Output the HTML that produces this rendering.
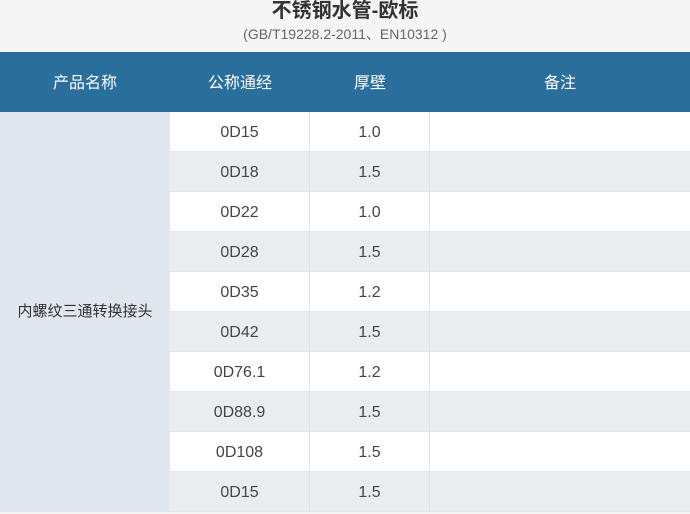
<!DOCTYPE html>
<html><head><meta charset="utf-8"><style>
*{margin:0;padding:0;box-sizing:border-box}
body{width:690px;height:512px;overflow:hidden;background:#f5f5f5;font-family:"Liberation Sans","Noto Sans CJK SC",sans-serif;color:#333}
.t{position:absolute;top:0;left:0;width:690px;text-align:center;font-size:20px;font-weight:bold;line-height:22px;color:#333}
.s{position:absolute;top:25px;left:0;width:690px;text-align:center;font-size:14px;line-height:19px;color:#666}
.h{position:absolute;top:52px;left:0;width:690px;height:60px;background:#2a6e9c;color:#fff;font-size:16px}
.h div{position:absolute;top:2px;line-height:60px;text-align:center}
.n{position:absolute;left:0;top:112px;width:170px;height:400px;background:#e1e7ee;font-size:15px;line-height:400px;text-align:center;padding-right:0px}
.r{position:absolute;left:170px;width:520px;height:40px;font-size:16px;color:#444;border-bottom:1px solid #e4e6e8}
.r div{position:absolute;top:0;height:40px;line-height:42px;text-align:center;border-right:1px solid #e2e2e2}
</style></head><body>
<div class="t">不锈钢水管-欧标</div>
<div class="s">(GB/T19228.2-2011、EN10312 )</div>
<div class="h"><div style="left:0;width:170px">产品名称</div><div style="left:170px;width:140px">公称通经</div><div style="left:310px;width:120px">厚壁</div><div style="left:430px;width:260px">备注</div></div>
<div class="n">内螺纹三通转换接头</div>
<div class="r" style="top:112px;background:#fff"><div style="left:0;width:140px">0D15</div><div style="left:140px;width:120px">1.0</div></div>
<div class="r" style="top:152px;background:#eaedf0"><div style="left:0;width:140px">0D18</div><div style="left:140px;width:120px">1.5</div></div>
<div class="r" style="top:192px;background:#fff"><div style="left:0;width:140px">0D22</div><div style="left:140px;width:120px">1.0</div></div>
<div class="r" style="top:232px;background:#eaedf0"><div style="left:0;width:140px">0D28</div><div style="left:140px;width:120px">1.5</div></div>
<div class="r" style="top:272px;background:#fff"><div style="left:0;width:140px">0D35</div><div style="left:140px;width:120px">1.2</div></div>
<div class="r" style="top:312px;background:#eaedf0"><div style="left:0;width:140px">0D42</div><div style="left:140px;width:120px">1.5</div></div>
<div class="r" style="top:352px;background:#fff"><div style="left:0;width:140px">0D76.1</div><div style="left:140px;width:120px">1.2</div></div>
<div class="r" style="top:392px;background:#eaedf0"><div style="left:0;width:140px">0D88.9</div><div style="left:140px;width:120px">1.5</div></div>
<div class="r" style="top:432px;background:#fff"><div style="left:0;width:140px">0D108</div><div style="left:140px;width:120px">1.5</div></div>
<div class="r" style="top:472px;background:#eaedf0"><div style="left:0;width:140px">0D15</div><div style="left:140px;width:120px">1.5</div></div>
</body></html>
